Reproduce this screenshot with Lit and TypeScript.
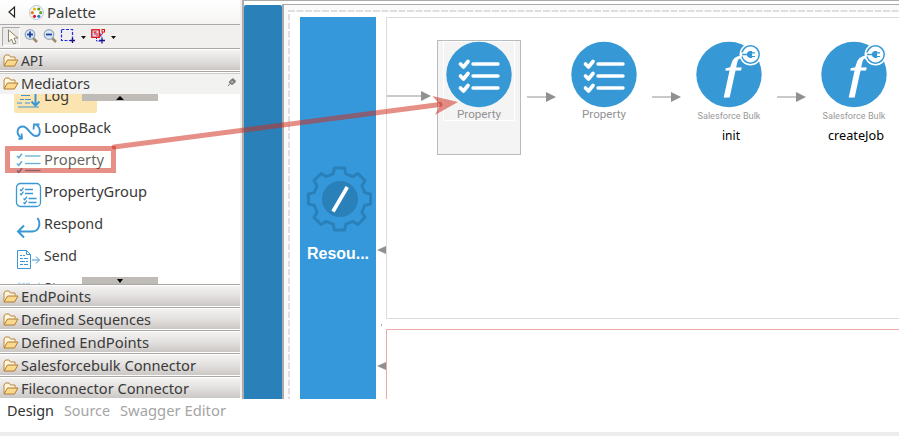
import { LitElement, html, css, svg } from "lit";
import { customElement } from "lit/decorators.js";

const label = (text: string, width: number, cls = "") => html`
  <svg class="label ${cls}" width=${width + 4} height="22" viewBox=${`0 0 ${width + 4} 22`}>
    <text x="0" y="16" textLength=${width} lengthAdjust="spacingAndGlyphs">${text}</text>
  </svg>`;

const folder = html`<svg class="folder" width="16" height="14" viewBox="0 0 16 14">
  <path d="M1 11.5V3l1.5-2h3.5l1.5 2H12v2.5" fill="#fff6dc" stroke="#b9853f"/>
  <path d="M1 12L4.500 6H15l-3.500 6z" fill="#fbd98c" stroke="#b07a32"/>
</svg>`;

const checks = (y: number) => svg`
  <path d=${`M0 ${y}l1.800 1.800 3.200-4`} stroke-width="1.600"/><path d=${`M8 ${y}h15.500`}/>`;

const icons: Record<string, unknown> = {
  Log: svg`<path d="M4 9.500h9M3 13.500h4M8 13.500h6M0 17h5M8 17h5M1 21h21" stroke-width="1.200"/><path d="M18.500 4v15M14.500 15.500l4 4 4-4" stroke-width="2"/>`,
  LoopBack: svg`<path d="M4 19.500C-1.500 16 0 8.500 6 8.500c5 0 7.500 9.500 13 9.500 5 0 5-8 .5-11" stroke-width="1.900"/><path d="M1.500 21l3.500-.500-.500-5M16.500 11.500l.500-5 5.500 0" stroke-width="1.800"/>`,
  Property: svg`${checks(6)}${checks(13.5)}${checks(20.5)}`,
  PropertyGroup: svg`<rect x="-.5" y="1.500" width="24" height="23" rx="4"/><path d="M3 7.500l1.200 1.200 2.300-3M3 11.500l1.200 1.200 2.300-3M8 7.500h8M8 11.500h8M6.500 16.500l1.200 1.200 2.300-3M6.500 20.500l1.200 1.200 2.300-3M11.500 16.500h8M11.500 20.500h8" stroke-width="1.300"/>`,
  Respond: svg`<path d="M20.500 4c4 6 1 13.500-5 13.500H1M7 11.500l-6 6 6 6" stroke-width="2"/>`,
  Send: svg`<path d="M.500 4.500h9l4 4v14H.500zM9.500 4.500v4h4M15 14h7M19 10.500l3.500 3.500-3.500 3.500" stroke-width="1"/><path d="M3 9.500h2M6 9.500h2M3 12.500h3M7 12.500h4M3 15.500h5M9 15.500h2M3 18.500h3M7 18.500h4" stroke-width="1.200"/>`,
  Store: svg`<path d="M1 5.500h3M5 5.500h3M9 5.500h4M21 5.500h2" stroke="#b9daf0"/>`,
};

const items: [string, number][] = [
  ["Log", 25], ["LoopBack", 67], ["Property", 60], ["PropertyGroup", 103],
  ["Respond", 59], ["Send", 33], ["Store", 35],
];

const drawers: [string, number][] = [
  ["EndPoints", 70], ["Defined Sequences", 130], ["Defined EndPoints", 128],
  ["Salesforcebulk Connector", 175], ["Fileconnector Connector", 168],
];

@customElement("palette-panel")
export class PalettePanel extends LitElement {
  static styles = css`
    :host { display: flex; flex-direction: column; width: 240px; height: 398px; background: #fff; overflow: hidden; }
    svg { display: block; flex: none; overflow: visible; }
    .label { font: 14.5px "Noto Sans", sans-serif; fill: #3a3a3a; }
    .head { height: 24px; flex: none; display: flex; align-items: center; padding-left: 8px; background: linear-gradient(#fff, #f5f4f3); box-sizing: border-box; }
    .head .label { margin: 1px 0 0 3px; }
    .wheel { margin-left: 13px; }
    .tools { height: 24px; flex: none; display: flex; box-sizing: border-box; border-top: 1px solid #aaa; background: #f1f0ef; }
    .drawer { height: 23px; box-sizing: border-box; display: flex; flex: none; align-items: center; padding-left: 3px;
      border-top: 1px solid #a9a6a4; border-bottom: 1px solid #fff; background: linear-gradient(#f5f4f3, #e4e2e1 50%, #cbc7c4); box-shadow: inset 0 1px #fff; }
    .drawer .label { margin: 3px 0 0 2px; }
    .folder { margin-top: 2px; }
    .open { background: #f2f2f1; border-bottom: 0; box-shadow: inset 0 1px #fff, inset 0 2px #ccc; }
    .open .label { margin-top: 1px; }
    .pin { margin: -3px 3px 0 auto; }
    .list { position: relative; flex: none; height: 190px; overflow: hidden; }
    .rows { margin-top: -12px; }
    .row { height: 31px; margin-bottom: 1px; display: flex; align-items: flex-start; width: 83px; margin-left: 14px; }
    .hot { background: #fce4b1; border-radius: 2px; }
    .icon { margin: 4px 0 0 3px; fill: none; stroke: #3b97d3; stroke-width: 1.300; }
    .row .label { margin: 3px 0 0 3px; }
    .scroll { position: absolute; left: 82px; width: 76px; height: 7px; background: #bfbbb7; display: flex; justify-content: center; align-items: center; }
    .up { top: 0; }
    .down { bottom: 0; }
  `;
  render() {
    return html`
      <div class="head">
        <svg width="8" height="12" viewBox="0 0 8 12"><path d="M6.500 1v10L1 6z" fill="#fff" stroke="#222" stroke-width="1.200"/></svg>
        <svg class="wheel" width="15" height="15" viewBox="0 0 15 15">
          <circle cx="7.500" cy="7.500" r="7" fill="#f8fbff" stroke="#b3c7dc"/>
          <circle cx="5.500" cy="4" r="1.600" fill="#e8b700"/><circle cx="9.800" cy="4" r="1.600" fill="#5a9e16"/>
          <circle cx="3.300" cy="7.700" r="1.600" fill="#e67818"/><circle cx="11.700" cy="7.700" r="1.600" fill="#65a51d"/>
          <circle cx="5.500" cy="11.300" r="1.600" fill="#dc2020"/><circle cx="9.800" cy="11.300" r="1.600" fill="#3278c8"/>
        </svg>
        ${label("Palette", 49)}
      </div>
      <div class="tools">
        <svg width="130" height="23" viewBox="0 25 130 23">
          <rect x="2" y="27" width="18" height="19" fill="#eae9e7"/>
          <path d="M2.500 46V27.500H20" fill="none" stroke="#aaa"/><path d="M3 45.500h16.500V28" fill="none" stroke="#fff"/>
          <path d="M8.500 30v12l3-3 2 5 2.500-1-2-5h4z" fill="#fffef0" stroke="#8a8570"/>
          ${[30, 49].map((x) => svg`
            <path d=${`M${x + 3} 38l4 4`} stroke="#9c8b68" stroke-width="2.500"/>
            <circle cx=${x} cy="34.500" r="4.800" fill="#d9e8f7" stroke="#9aa9b8" stroke-width="1.300"/>
            <path d=${`M${x - 3} 34.500h6`} stroke="#20409a" stroke-width="1.800"/>`)}
          <path d="M30 31.500v6" stroke="#20409a" stroke-width="1.800"/>
          <rect x="61.500" y="29.500" width="11" height="11" fill="none" stroke="#2030e8" stroke-width="1.200" stroke-dasharray="3 1.500"/>
          <path d="M70 40.500h5M72.500 38v5M99 40.500h6M102 37.500v6" stroke="#20108a" stroke-width="1.300"/>
          <path d="M81 36h5l-2.500 3zM111 36h5l-2.500 3z" fill="#111"/>
          <path d="M96.500 37v4h4M97 34h4v3" fill="none" stroke="#2030e8" stroke-dasharray="2 1"/>
          <rect x="91.800" y="29.800" width="7.500" height="7.500" fill="#d6d8f8" stroke="#e01010" stroke-width="1.300"/>
          <path d="M93.500 32h3M95 32v3M97 33v3M99.500 36l2-1 1.500-3" fill="none" stroke="#e01010"/>
          <rect x="102" y="29.500" width="2.500" height="2.500" fill="#fff" stroke="#e01010"/>
        </svg>
      </div>
      <div class="drawer">${folder}${label("API", 22)}</div>
      <div class="drawer open">${folder}${label("Mediators", 69)}
        <svg class="pin" width="10" height="10" viewBox="0 0 10 10"><path d="M5.500 1.500l3 3M5 2.500L2.500 5 5 7.500 8 5z" fill="#aaa" stroke="#777" stroke-width="1.200"/><path d="M3.500 6L1 9" stroke="#777"/></svg>
      </div>
      <div class="list">
        <div class="rows">
          ${items.map(([name, w], i) => html`<div class="row ${i === 0 ? "hot" : ""}">
            <svg class="icon" width="24" height="24" viewBox="0 0 24 24">${icons[name]}</svg>${label(name, w)}
          </div>`)}
        </div>
        <div class="scroll up"><svg width="8" height="4" viewBox="0 0 8 4"><path d="M0 4l4-4 4 4z"/></svg></div>
        <div class="scroll down"><svg width="6" height="4" viewBox="0 0 6 4"><path d="M0 0h6L3 4z"/></svg></div>
      </div>
      ${drawers.map(([name, w]) => html`<div class="drawer">${folder}${label(name, w)}</div>`)}
    `;
  }
}

const taskDisc = (x: number) => svg`
  <circle cx=${x} cy="74.500" r="32.700" fill="#3698d5"/>
  ${[64, 76, 88].map((y) => svg`
    <path d=${`M${x - 18.5} ${y}l3 3 4.500-5.500`} class="tick"/>
    <path d=${`M${x - 6} ${y}h25`} class="bar"/>`)}
  <text x=${x - 22} y="118" class="kind" textLength="44" lengthAdjust="spacingAndGlyphs">Property</text>`;

const connectorDisc = (x: number, name: string, nx: number, w: number) => svg`
  <circle cx=${x} cy="74.500" r="32.700" fill="#3698d5"/>
  <text x=${x - 5} y="87.500" class="fn" textLength="15" lengthAdjust="spacingAndGlyphs">f</text>
  <circle cx=${x + 21.5} cy="54.500" r="11" fill="#fff"/>
  <circle cx=${x + 21.5} cy="54.500" r="8.700" fill="none" stroke="#3698d5" stroke-width="1.500"/>
  <path d=${`M${x + 11} 54.500h6`} stroke="#fff" stroke-width="4"/>
  <path d=${`M${x + 13} 54.500h6`} stroke="#3698d5" stroke-width="1.500"/>
  <path d=${`M${x + 22.5} 51.500v6h-1a3 3 0 0 1 0-6zM${x + 22.5} 52.800h3.500M${x + 22.5} 56.500h3.500`} fill="#3698d5" stroke="#3698d5" stroke-width="1.200"/>
  <text x=${x - 31.5} y="119" class="sub" textLength="63" lengthAdjust="spacingAndGlyphs">Salesforce Bulk</text>
  <text x=${nx} y="140" class="name" textLength=${w} lengthAdjust="spacingAndGlyphs">${name}</text>`;

const flow = (x1: number, x2: number, y: number) => svg`
  <path d=${`M${x1} ${y}H${x2 - 9}`} stroke="#c9c9c9" stroke-width="2"/>
  <path d=${`M${x2 - 10} ${y - 5}l10 5-10 5z`} fill="#909090"/>`;

const gearPath = () => {
  const pts: string[] = [];
  for (let i = 0; i < 8; i++) {
    const a = (i * Math.PI) / 4 - Math.PI / 2;
    for (const [d, r] of [[-0.25, 26], [-0.16, 31.5], [0.16, 31.5], [0.25, 26]]) {
      pts.push(`${(339.5 + r * Math.cos(a + d)).toFixed(1)} ${(199 + r * Math.sin(a + d)).toFixed(1)}`);
    }
  }
  return `M${pts.join("L")}Z`;
};

@customElement("flow-canvas")
export class FlowCanvas extends LitElement {
  static styles = css`
    :host { display: block; width: 659px; height: 399px; }
    svg { display: block; }
    .tick { fill: none; stroke: #fff; stroke-width: 3.700; stroke-linejoin: round; stroke-linecap: round; }
    .bar { stroke: #fff; stroke-width: 3.400; stroke-linecap: round; }
    .kind { font: 11.500px Roboto, sans-serif; fill: #929292; }
    .sub { font: 9.500px Roboto, sans-serif; fill: #999; }
    .name { font: 12px "Noto Sans", sans-serif; fill: #000; }
    .fn { font: italic 44px "Liberation Serif", serif; fill: #fff; stroke: #fff; stroke-width: 1.2; }
    .res { font: bold 16px "Liberation Sans", sans-serif; fill: #fff; }
  `;
  render() {
    return html`<svg width="659" height="399" viewBox="240 0 659 399">
      <rect x="240" width="659" height="399" fill="#fff"/>
      <path d="M243 .500H899" stroke="#aaa"/>
      <rect x="284" y="5" width="615" height="5" fill="#fafafa"/><rect x="284" y="5" width="4" height="394" fill="#fafafa"/>
      <path d="M284 4.500H899" stroke="#aaa"/>
      <rect x="240" width="2" height="398" fill="#f0efee"/>
      <rect x="242" y="0" width="2" height="399" fill="#acacac"/><rect x="282" y="4" width="2" height="395" fill="#acacac"/>
      <path d="M244 399V7q0-2 2-2h34q2 0 2 2v392z" fill="#2a80b9"/>
      <path d="M288 11H899" stroke="#dfdfdf" stroke-width="2" stroke-dasharray="7 1.500"/>
      <path d="M289 14V399" stroke="#dfdfdf" stroke-width="2" stroke-dasharray="6.500 2"/>
      <rect x="300" y="17" width="76" height="382" fill="#3598db"/>
      <path d="M899 17.500H386.500V318.500H899" fill="none" stroke="#dcdcdc"/>
      <path d="M899 329.500H386.500V399" fill="none" stroke="#eeaaa8"/>
      <path d="M381.500 324v2" stroke="#aaa"/>
      <path d="M377 250l9-4v8zM377 366l9-4v8z" fill="#909090"/>
      <path d=${gearPath()} fill="none" stroke="#2a80b9" stroke-width="3" stroke-linejoin="round"/>
      <circle cx="340" cy="199" r="18" fill="#2a80b9"/>
      <path d="M333 211.500L347.300 187" stroke="#fff" stroke-width="3.700"/>
      <text x="307" y="259" class="res" textLength="62" lengthAdjust="spacingAndGlyphs">Resou...</text>
      <rect x="437.500" y="40.500" width="83" height="114" fill="#f4f4f4" stroke="#b9bcbf"/>
      <rect x="443.500" y="41.500" width="71" height="79" fill="none" stroke="#fff"/>
      ${flow(387, 431, 96)}${flow(527, 556, 97)}${flow(652, 681, 97)}${flow(777, 806, 97)}
      ${taskDisc(479)}${taskDisc(604)}
      ${connectorDisc(729, "init", 722, 18)}${connectorDisc(854, "createJob", 828, 56)}
    </svg>`;
  }
}

@customElement("app-root")
export class AppRoot extends LitElement {
  static styles = css`
    :host { display: flex; flex-direction: column; position: relative; width: 899px; height: 436px; background: #fff; overflow: hidden; }
    .work { display: flex; height: 399px; }
    .tabs { display: flex; height: 33px; padding-left: 7px; gap: 6px; box-sizing: border-box; }
    .foot { height: 4px; background: #ececec; }
    .label { font: 14.500px "Noto Sans", sans-serif; fill: #a5a5a5; margin-top: 1px; overflow: visible; }
    .on { fill: #333; }
    .note { position: absolute; left: 0; top: 0; }
  `;
  render() {
    return html`
      <div class="work"><palette-panel></palette-panel><flow-canvas></flow-canvas></div>
      <div class="tabs">${label("Design", 47, "on")}${label("Source", 46)}${label("Swagger Editor", 106)}</div>
      <div class="foot"></div>
      <svg class="note" width="899" height="436" viewBox="0 0 899 436">
        <rect x="10" y="151" width="101" height="17" fill="#fffdf0" fill-opacity=".22"/>
        <path d="M5 146H116V173H5zM10 151V168H111V151z" fill="#ce2c1b" fill-opacity=".53" fill-rule="evenodd"/>
        <path d="M114 147L440 104.500" stroke="#ce2c1b" stroke-opacity=".53" stroke-width="4.800" stroke-linecap="round"/>
        <path d="M458 102L432.500 96 440 105 435 115z" fill="#ce2c1b" fill-opacity=".53"/>
      </svg>`;
  }
}
